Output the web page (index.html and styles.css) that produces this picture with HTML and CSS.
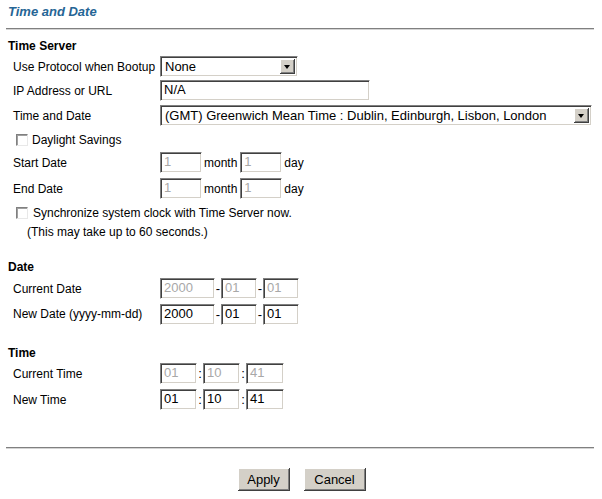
FILE: index.html
```html
<!DOCTYPE html>
<html lang="en">
<head>
    <meta charset="UTF-8">
    <title>Time and Date</title>
    <link rel="stylesheet" href="styles.css">
</head>
<body>
    <div class="page">
        <div class="title">Time and Date</div>
        <div class="rule"></div>

        <div class="section-head">Time Server</div>
        <div class="row h23">
            <div class="label">Use Protocol when Bootup</div>
            <div class="select w-proto"><span class="select-text">None</span><span class="drop"><i></i></span></div>
        </div>
        <div class="row h25">
            <div class="label">IP Address or URL</div>
            <div class="box w-ip">N/A</div>
        </div>
        <div class="row h25">
            <div class="label">Time and Date</div>
            <div class="select w-zone"><span class="select-text">(GMT) Greenwich Mean Time : Dublin, Edinburgh, Lisbon, London</span><span class="drop"><i></i></span></div>
        </div>
        <div class="row h23">
            <div class="check-line"><span class="check"></span>Daylight Savings</div>
        </div>
        <div class="row h23">
            <div class="label">Start Date</div>
            <div class="box off w-md">1</div><span class="unit">month</span>
            <div class="box off w-md">1</div><span class="unit">day</span>
        </div>
        <div class="row h29">
            <div class="label">End Date</div>
            <div class="box off w-md">1</div><span class="unit">month</span>
            <div class="box off w-md">1</div><span class="unit">day</span>
        </div>
        <div class="row h20">
            <div class="check-line sync"><span class="check"></span>Synchronize system clock with Time Server now.</div>
        </div>
        <div class="row h18">
            <div class="note">(This may take up to 60 seconds.)</div>
        </div>

        <div class="section-head gap">Date</div>
        <div class="row h25">
            <div class="label">Current Date</div>
            <div class="box off w-year">2000</div><span class="sep">-</span>
            <div class="box off w-two">01</div><span class="sep">-</span>
            <div class="box off w-two">01</div>
        </div>
        <div class="row h26">
            <div class="label">New Date (yyyy-mm-dd)</div>
            <div class="box w-year">2000</div><span class="sep">-</span>
            <div class="box w-two">01</div><span class="sep">-</span>
            <div class="box w-two">01</div>
        </div>

        <div class="section-head gap">Time</div>
        <div class="row h23">
            <div class="label">Current Time</div>
            <div class="box off w-time">01</div><span class="sep">:</span>
            <div class="box off w-time">10</div><span class="sep">:</span>
            <div class="box off w-time last">41</div>
        </div>
        <div class="row h29">
            <div class="label">New Time</div>
            <div class="box w-time">01</div><span class="sep">:</span>
            <div class="box w-time">10</div><span class="sep">:</span>
            <div class="box w-time last">41</div>
        </div>

        <div class="rule bottom"></div>
        <div class="buttons">
            <button class="btn apply">Apply</button>
            <button class="btn cancel">Cancel</button>
        </div>
    </div>
</body>
</html>
```

FILE: styles.css
```css
body {
    margin: 0;
    font-family: "Liberation Sans", Arial, sans-serif;
    font-size: 12px;
    color: #000;
    background: #fff;
}
.page {
    padding-top: 4px;
}
.title {
    margin-left: 8px;
    font-size: 13px;
    line-height: 16px;
    font-weight: bold;
    font-style: italic;
    color: #266595;
}
.rule {
    margin: 8px 8px 0 6px;
    border-top: 1px solid #808080;
    border-bottom: 1px solid #d4d4d4;
}
.rule.bottom {
    margin-top: 33px;
}
.section-head {
    margin: 7px 0 0 8px;
    height: 18px;
    line-height: 18px;
    font-weight: bold;
}
.section-head.gap {
    margin-top: 17px;
}
.row {
    display: flex;
    align-items: center;
    padding-left: 13px;
}
.h18 { height: 18px; }
.h20 { height: 20px; }
.h23 { height: 23px; }
.h25 { height: 25px; }
.h26 { height: 26px; }
.h29 { height: 29px; }
.label {
    width: 147px;
    flex: none;
}

/* sunken text boxes */
.box, .select {
    box-sizing: border-box;
    height: 21px;
    line-height: 17px;
    font-size: 13px;
    padding: 0 0 0 3px;
    border: 1px solid;
    border-color: #808080 #ffffff #ffffff #808080;
    box-shadow: inset 1px 1px #404040, inset -1px -1px #d4d0c8;
    background: #fff;
    white-space: nowrap;
    overflow: hidden;
}
.box.off {
    color: #a8a8a8;
}
.w-ip { width: 210px; }
.w-proto { width: 138px; }
.w-zone { width: 432px; }
.w-md { width: 42px; }
.w-year { width: 55px; }
.w-two { width: 36px; }
.w-time { width: 37px; }
.w-time.last { width: 38px; }

.select {
    display: flex;
    align-items: center;
    justify-content: space-between;
    padding: 0 2px 0 4px;
}
.drop {
    flex: none;
    position: relative;
    width: 15px;
    height: 15px;
    background: #d4d0c8;
    box-shadow: inset -1px -1px #404040, inset 1px 1px #ffffff, inset -2px -2px #808080;
}
.drop i {
    position: absolute;
    left: 4px;
    top: 6px;
    width: 0;
    height: 0;
    border-left: 3.5px solid transparent;
    border-right: 3.5px solid transparent;
    border-top: 4px solid #000;
}

.unit {
    margin: 0 3px 0 2px;
}
.sep {
    width: 6px;
    text-align: center;
    font-size: 13px;
}

.check-line {
    display: flex;
    align-items: center;
    margin-left: 3px;
}
.check {
    box-sizing: border-box;
    width: 12px;
    height: 12px;
    margin-right: 4px;
    border: 1px solid;
    border-color: #808080 #e8e8e8 #e8e8e8 #808080;
    box-shadow: inset 1px 1px #a0a0a0;
    background: #fff;
}
.check-line.sync .check {
    margin-right: 5px;
}
.note {
    margin-left: 14px;
}

.buttons {
    display: flex;
    justify-content: center;
    gap: 14px;
    margin-top: 19px;
    padding-left: 1px;
}
.btn {
    height: 23px;
    padding: 0;
    font-family: "Liberation Sans", Arial, sans-serif;
    font-size: 13px;
    color: #000;
    background: #d4d0c8;
    border: none;
    box-shadow: inset -1px -1px #404040, inset 1px 1px #ffffff, inset -2px -2px #808080;
}
.apply { width: 52px; }
.cancel { width: 62px; }
```
